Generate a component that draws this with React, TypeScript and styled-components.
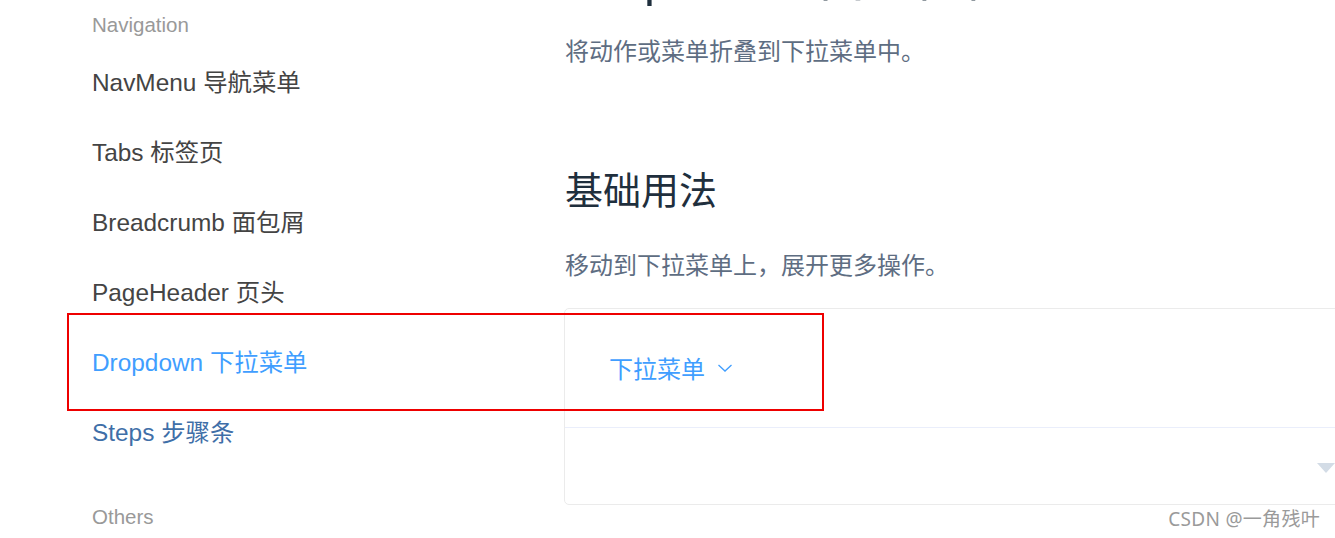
import React from 'react'
import styled, { createGlobalStyle } from 'styled-components'

const GlobalStyle = createGlobalStyle`
  html, body {
    margin: 0;
    padding: 0;
    background: #fff;
    overflow: hidden;
  }
  body {
    font-family: "Liberation Sans", Arial, "Noto Sans CJK SC", sans-serif;
  }
`

type NavGroup = { title: string; items: { label: string; state?: 'active' | 'visited' }[] }

const groups: NavGroup[] = [
  {
    title: 'Navigation',
    items: [
      { label: 'NavMenu 导航菜单' },
      { label: 'Tabs 标签页' },
      { label: 'Breadcrumb 面包屑' },
      { label: 'PageHeader 页头' },
      { label: 'Dropdown 下拉菜单', state: 'active' },
      { label: 'Steps 步骤条', state: 'visited' },
    ],
  },
  { title: 'Others', items: [] },
]

const App = () => {
  return (
    <Page>
      <GlobalStyle />
      <SideNav>
        {groups.map(group => (
          <Group key={group.title}>
            <GroupTitle>{group.title}</GroupTitle>
            {group.items.map(item => (
              <NavItem key={item.label} $state={item.state}>
                {item.label}
              </NavItem>
            ))}
          </Group>
        ))}
      </SideNav>
      <Content>
        <PageTitle>Dropdown 下拉菜单</PageTitle>
        <Paragraph>将动作或菜单折叠到下拉菜单中。</Paragraph>
        <SectionTitle>基础用法</SectionTitle>
        <Paragraph>移动到下拉菜单上，展开更多操作。</Paragraph>
        <DemoBlock>
          <DemoSource>
            <DropdownLink>
              下拉菜单
              <svg width="16" height="10" viewBox="0 0 16 10" fill="none">
                <path d="M1.5 2 L8 8 L14.5 2" stroke="#409eff" strokeWidth="1.3" />
              </svg>
            </DropdownLink>
          </DemoSource>
          <DemoControl>
            <svg width="18" height="10" viewBox="0 0 18 10">
              <path d="M0 0 H18 L9 10 Z" fill="#d3dce6" />
            </svg>
          </DemoControl>
        </DemoBlock>
      </Content>
      <Highlight />
      <Watermark>CSDN @一角残叶</Watermark>
    </Page>
  )
}

export default App

const Page = styled.div`
  position: relative;
  display: flex;
  width: 1335px;
  height: 538px;
  overflow: hidden;
`

const SideNav = styled.nav`
  width: 565px;
  flex-shrink: 0;
  padding-left: 92px;
  box-sizing: border-box;
  margin-top: 2px;
`

const Group = styled.div`
  & + & {
    margin-top: 26px;
  }
`

const GroupTitle = styled.div`
  font-size: 20.5px;
  line-height: 46px;
  color: #999;
`

const NavItem = styled.div<{ $state?: 'active' | 'visited' }>`
  font-size: 24.4px;
  line-height: 70px;
  color: ${p => (p.$state === 'active' ? '#409eff' : p.$state === 'visited' ? '#3f6fa8' : '#444')};
  white-space: nowrap;
`

const Content = styled.main`
  flex: 1;
  min-width: 0;
  display: flex;
  flex-direction: column;
`

const PageTitle = styled.h2`
  margin: -50px 0 0;
  font-size: 49px;
  line-height: 58px;
  font-weight: normal;
  color: #1f2f3d;
  white-space: nowrap;
`

const Paragraph = styled.p`
  margin: 27px 0 0;
  font-size: 24px;
  line-height: 34px;
  color: #5e6d82;
  white-space: nowrap;
`

const SectionTitle = styled.h3`
  margin: 98px 0 0;
  font-size: 38px;
  line-height: 48px;
  font-weight: normal;
  color: #1f2f3d;
  & + ${Paragraph} {
    margin-top: 34px;
  }
`

const DemoBlock = styled.div`
  margin-top: 25px;
  margin-left: -1px;
  width: 1522px;
  flex-shrink: 0;
  border: 1px solid #ebebeb;
  border-radius: 5px;
`

const DemoSource = styled.div`
  padding: 40px 44px 42px;
  height: 118px;
  box-sizing: border-box;
  display: flex;
  align-items: center;
`

const DropdownLink = styled.span`
  display: inline-flex;
  align-items: center;
  gap: 12px;
  font-size: 24px;
  color: #409eff;
  svg {
    margin-top: 2px;
  }
`

const DemoControl = styled.div`
  height: 76px;
  border-top: 1px solid #eaeefb;
  display: flex;
  align-items: center;
  justify-content: center;
  svg {
    margin-top: 4px;
  }
`

const Highlight = styled.div`
  position: absolute;
  left: 67px;
  top: 313px;
  width: 757px;
  height: 98px;
  box-sizing: border-box;
  border: 2.5px solid #ee0000;
  pointer-events: none;
`

const Watermark = styled.div`
  position: absolute;
  right: 15px;
  bottom: 6px;
  font-family: "Noto Sans", "Noto Sans CJK SC", sans-serif;
  font-size: 19px;
  color: #9a9a9a;
  letter-spacing: 0.3px;
`
